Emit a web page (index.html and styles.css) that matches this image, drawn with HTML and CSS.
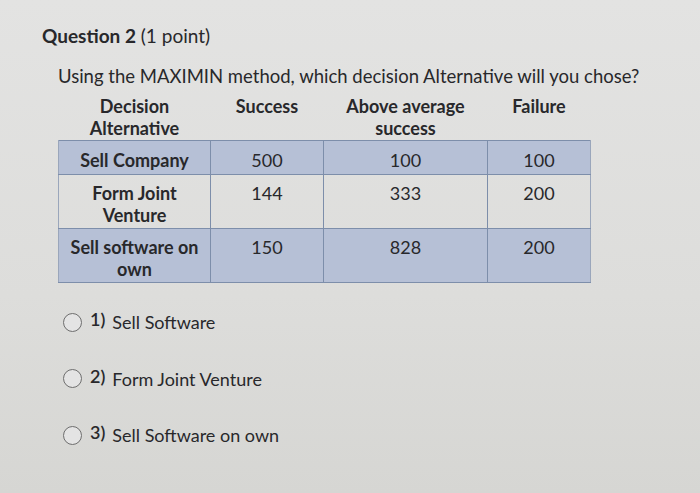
FILE: index.html
```html
<!DOCTYPE html>
<html>
<head>
<meta charset="utf-8">
<link rel="stylesheet" href="styles.css">
</head>
<body>
<div class="page">
  <h2 class="title"><b>Question 2</b> (1 point)</h2>
  <p class="prompt">Using the MAXIMIN method, which decision Alternative will you chose?</p>
  <table class="grid">
    <colgroup>
      <col class="c1"><col class="c2"><col class="c3"><col class="c4">
    </colgroup>
    <thead>
      <tr>
        <th>Decision<br>Alternative</th>
        <th>Success</th>
        <th>Above average<br>success</th>
        <th>Failure</th>
      </tr>
    </thead>
    <tbody>
      <tr class="shade r1">
        <td class="lbl">Sell Company</td><td>500</td><td>100</td><td>100</td>
      </tr>
      <tr class="r2">
        <td class="lbl">Form Joint<br>Venture</td><td>144</td><td>333</td><td>200</td>
      </tr>
      <tr class="shade r3">
        <td class="lbl">Sell software on<br>own</td><td>150</td><td>828</td><td>200</td>
      </tr>
    </tbody>
  </table>
  <ul class="options">
    <li><span class="radio"></span><span class="num">1)</span><span class="txt">Sell Software</span></li>
    <li><span class="radio"></span><span class="num">2)</span><span class="txt">Form Joint Venture</span></li>
    <li><span class="radio"></span><span class="num">3)</span><span class="txt">Sell Software on own</span></li>
  </ul>
</div>
</body>
</html>
```
FILE: styles.css
```css
html, body {
  margin: 0;
  padding: 0;
}
body {
  width: 700px;
  height: 493px;
  overflow: hidden;
  background: linear-gradient(180deg, #e3e3e2 0%, #dddddb 60%, #d6d6d3 100%);
  font-family: Lato, "Open Sans", sans-serif;
  color: #28282b;
}
.page {
  padding: 24px 0 0 42px;
}
.title {
  margin: 0;
  font-size: 19px;
  font-weight: 400;
  line-height: 24px;
}
.title b {
  font-weight: 700;
}
.prompt {
  margin: 15px 0 0 16px;
  font-size: 18.5px;
  line-height: 26px;
}
.grid {
  margin: 6px 0 0 16px;
  border-collapse: collapse;
  font-size: 18px;
  line-height: 22px;
}
.c1 { width: 152px; }
.c2 { width: 113px; }
.c3 { width: 164px; }
.c4 { width: 103px; }
.grid th {
  font-weight: 700;
  text-align: center;
  vertical-align: top;
  padding: 0;
  height: 45px;
}
.grid td {
  text-align: center;
  vertical-align: top;
  padding: 8px 0 4px;
  border: 1px solid #7d8eaa;
}
.grid td:first-child {
  border-left-color: #9aa6bb;
}
.grid td:last-child {
  border-right-color: #9aa6bb;
}
.grid td.lbl {
  font-weight: 700;
}
.r1 td {
  height: 19px;
  padding-top: 8px;
  padding-bottom: 3px;
}
.r2 td {
  padding-top: 7px;
  padding-bottom: 2px;
}
.r3 td {
  padding-top: 7px;
  padding-bottom: 2px;
}
.shade td {
  background: #b6c0d6;
}
.options {
  list-style: none;
  margin: 27px 0 0 21px;
  padding: 0;
}
.options li {
  display: flex;
  align-items: center;
  height: 24px;
  margin-bottom: 32.5px;
}
.radio {
  width: 17px;
  height: 17px;
  border: 1.5px solid #6e6e6e;
  border-radius: 50%;
  background: #e4e4e4;
  flex: none;
}
.num {
  margin-left: 8px;
  font-size: 18px;
  font-weight: 600;
  position: relative;
  top: -3px;
}
.txt {
  margin-left: 7px;
  font-size: 18px;
}
```
